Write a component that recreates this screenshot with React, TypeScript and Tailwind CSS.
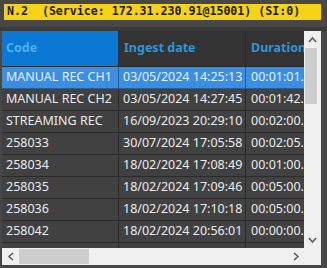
import React from 'react'

const rows = [
  ['MANUAL REC CH1', '03/05/2024 14:25:13', '00:01:01.000'],
  ['MANUAL REC CH2', '03/05/2024 14:27:45', '00:01:42.000'],
  ['STREAMING REC', '16/09/2023 20:29:10', '00:02:00.000'],
  ['258033', '30/07/2024 17:05:58', '00:02:05.120'],
  ['258034', '18/02/2024 17:08:49', '00:01:00.000'],
  ['258035', '18/02/2024 17:09:46', '00:05:00.000'],
  ['258036', '18/02/2024 17:10:18', '00:05:00.000'],
  ['258042', '18/02/2024 20:56:01', '00:00:00.000'],
  ['258043', '18/02/2024 20:58:11', '00:00:00.000'],
]

export default function App() {
  return (
    <div className="flex h-[268px] w-[327px] flex-col overflow-hidden bg-[#474747] pt-[4px]">
      {/* status bar */}
      <div
        className="mx-[4px] flex h-[16px] w-[317px] items-center bg-[#f6d314] pl-[3px] text-[11.6px] font-bold whitespace-pre text-[#1a1a1a]"
        style={{ fontFamily: '"DejaVu Sans Mono", monospace' }}
      >
        {'N.2  (Service: 172.31.230.91@15001) (SI:0)'}
      </div>

      <div className="mt-[7px] h-[4px] w-full bg-[#3a3a3a]" />

      {/* grid panel */}
      <div
        className="relative ml-[2px] flex h-[234px] w-[319px] overflow-hidden bg-[#f0f0f0]"
        style={{ fontFamily: '"Noto Sans", "Open Sans", sans-serif' }}
      >
        <div className="flex w-[302px] flex-col">
          <div className="h-[217px] overflow-hidden bg-[#414141]">
            {/* header */}
            <div className="flex h-[36px] border-b border-[#2a2a2a] text-[12.5px] font-bold">
              <div className="flex w-[117px] shrink-0 items-center border-r border-[#2a2a2a] bg-[#0b78d4] pl-[4px] text-[#4fb0f0]">
                Code
              </div>
              <div className="flex w-[127px] shrink-0 items-center border-r border-[#2a2a2a] bg-[#333333] pl-[5px] text-[#2d96d8]">
                Ingest date
              </div>
              <div className="flex w-[80px] shrink-0 items-center bg-[#333333] pl-[5px] whitespace-nowrap text-[#2d96d8]">
                Duration
              </div>
            </div>
            {rows.map((r, i) => (
              <div
                key={i}
                className={
                  'flex h-[22px] border-b text-[12.5px] ' +
                  (i === 0
                    ? 'border-[#2a5f96] bg-[#3b8ee0] text-[#e6f1fc]'
                    : 'border-[#2a2a2a] text-[#ececec]')
                }
              >
                <div
                  className={
                    'flex w-[117px] shrink-0 items-center border-r pl-[4px] whitespace-nowrap ' +
                    (i === 0 ? 'border-[#2a5f96]' : 'border-[#2a2a2a]')
                  }
                >
                  {r[0]}
                </div>
                <div
                  className={
                    'flex w-[127px] shrink-0 items-center border-r pl-[4px] whitespace-pre ' +
                    (i === 0 ? 'border-[#2a5f96]' : 'border-[#2a2a2a]')
                  }
                >
                  {r[1]}
                </div>
                <div className="flex w-[80px] shrink-0 items-center pl-[5px] whitespace-nowrap">{r[2]}</div>
              </div>
            ))}
          </div>
          {/* horizontal scrollbar */}
          <div className="flex h-[17px] items-center bg-[#f0f0f0]">
            <div className="flex w-[17px] items-center justify-center">
              <svg width="8" height="9" viewBox="0 0 8 9" fill="none" stroke="#606060" strokeWidth="1.6">
                <path d="M6 1L2 4.5L6 8" />
              </svg>
            </div>
            <div className="h-[15px] w-[70px] bg-[#cdcdcd]" />
            <div className="flex-1" />
            <div className="flex w-[17px] items-center justify-center">
              <svg width="8" height="9" viewBox="0 0 8 9" fill="none" stroke="#606060" strokeWidth="1.6">
                <path d="M2 1L6 4.5L2 8" />
              </svg>
            </div>
          </div>
        </div>
        {/* vertical scrollbar */}
        <div className="flex w-[17px] flex-col bg-[#f0f0f0]">
          <div className="flex h-[17px] items-center justify-center">
            <svg width="9" height="8" viewBox="0 0 9 8" fill="none" stroke="#606060" strokeWidth="1.6">
              <path d="M1 6L4.5 2L8 6" />
            </svg>
          </div>
          <div className="ml-[1px] mr-[4px] h-[56px] bg-[#cdcdcd]" />
          <div className="flex-1" />
          <div className="flex h-[17px] items-center justify-center">
            <svg width="9" height="8" viewBox="0 0 9 8" fill="none" stroke="#606060" strokeWidth="1.6">
              <path d="M1 2L4.5 6L8 2" />
            </svg>
          </div>
          <div className="h-[17px]" />
        </div>
      </div>
    </div>
  )
}
